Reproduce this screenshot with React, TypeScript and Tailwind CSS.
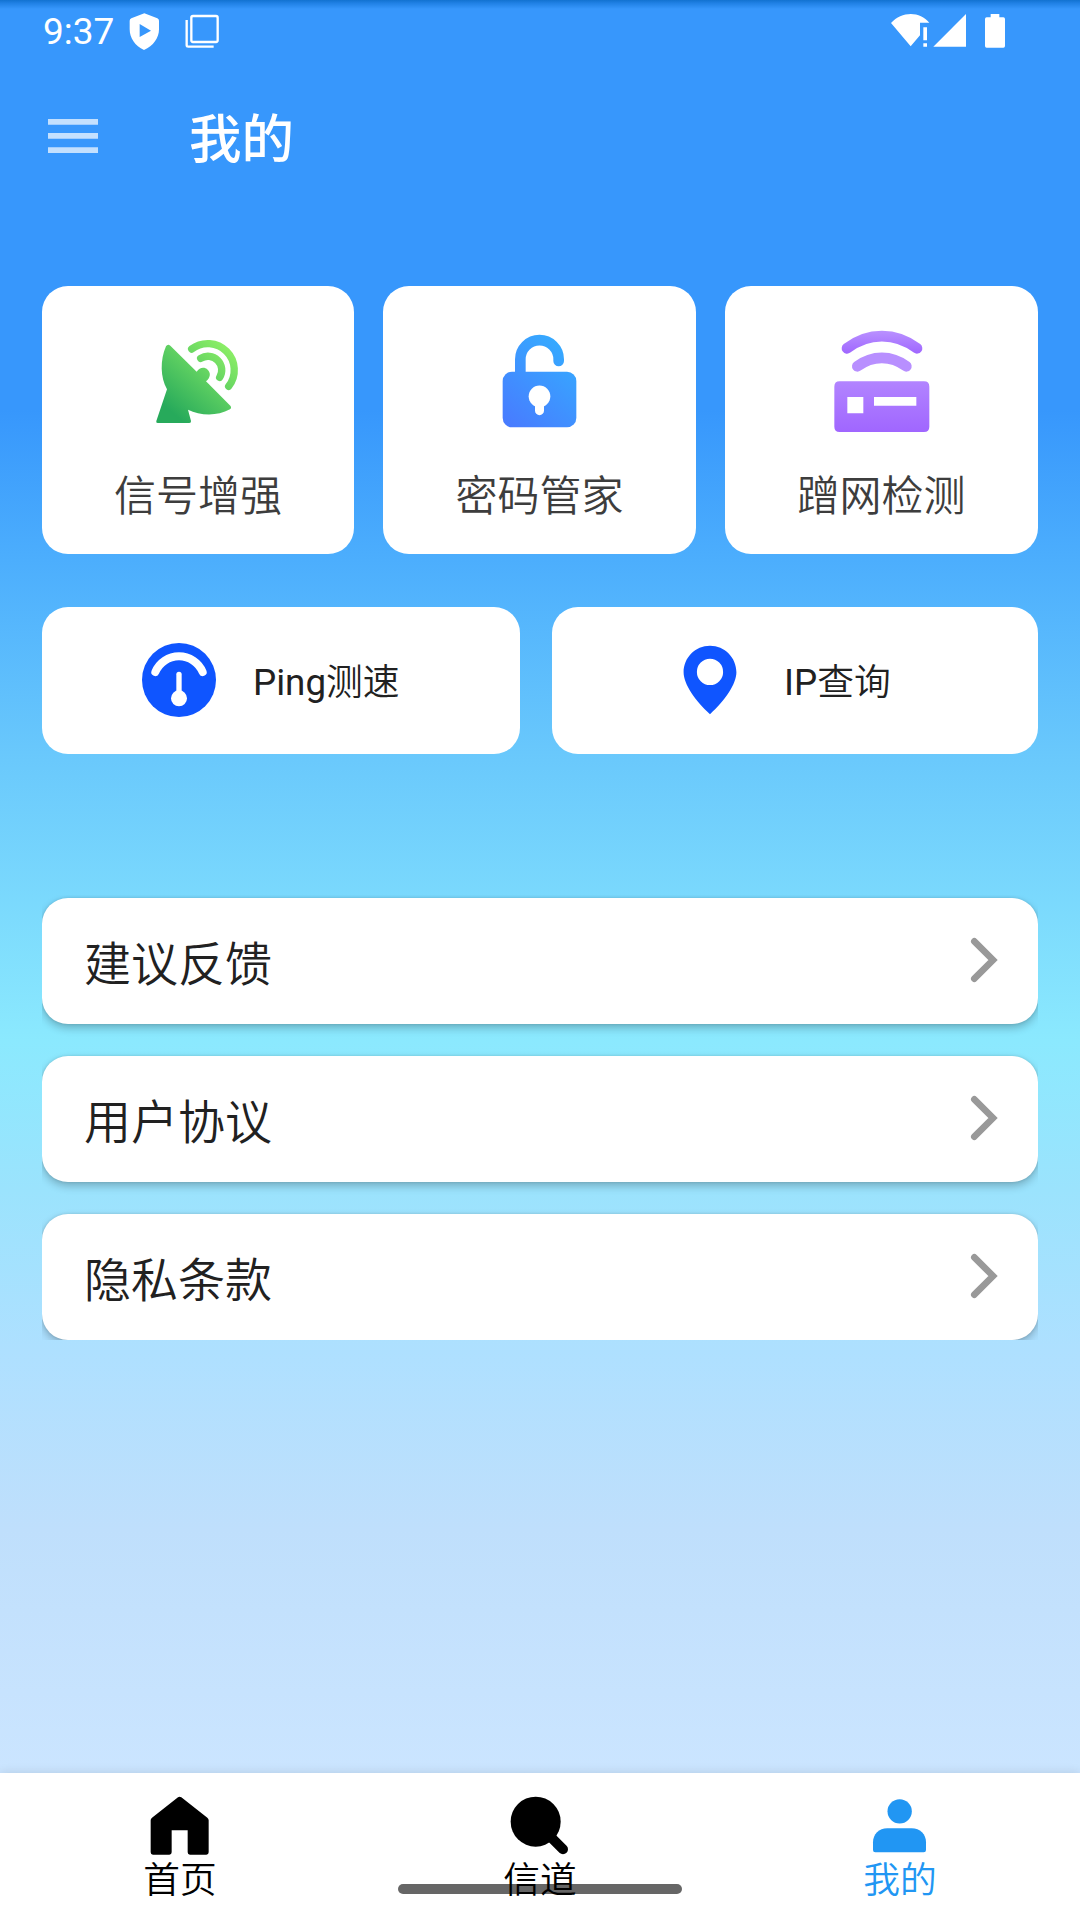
import React from "react";
import clsx from "clsx";

const StatusBar = () => (
    <div className="flex h-[63px] shrink-0 items-start bg-[linear-gradient(to_bottom,#1272d0_0px,#1f80e4_3px,#3797fc00_9px)] text-white">
        <div className="ml-[43px] mt-[10px] w-[74px] whitespace-nowrap text-[37px] leading-[44px]">
            9:37
        </div>
        <svg className="ml-3 mt-[13px]" width="31" height="37" viewBox="387 39 93 111" fill="currentColor">
            <path
                fillRule="evenodd"
                d="M433 40L472 55Q477 57 477 62V88C477 114 460 138 432 150C405 138 389 114 389 88V62Q389 57 394 55ZM419 72V111L453 92Z"
            />
        </svg>
        <svg className="ml-[25px] mt-[14px]" width="34" height="35" viewBox="555 42 102 105" fill="none" stroke="currentColor" strokeWidth="7">
            <rect x="574" y="48" width="79" height="78" rx="5" />
            <path d="M560 60V136Q560 140 565 140H641" />
        </svg>
        <svg className="ml-[671px] mt-[13px]" width="116" height="36" viewBox="90 39 348 108" fill="currentColor">
            <path d="M152 139L93 69C125 33 180 33 208 68H180V106Z" />
            <path d="M190 82h11v39h-11zM190 130h11v10h-11z" />
            <path d="M220 140L318 42V140Z" />
            <path d="M392 42h26v10h12q5 0 5 5v81q0 5-5 5h-50q-5 0-5-5v-81q0-5 5-5h12z" />
        </svg>
    </div>
);

const AppBar = () => (
    <div className="flex h-[147px] shrink-0 items-center pl-12">
        <svg className="mb-px opacity-70" width="50" height="36" viewBox="144 354 150 108" fill="#fff">
            <path d="M144 357h150v17H144zM144 399h150v17H144zM144 442h150v17H144z" />
        </svg>
        <h1 className="ml-[91px] mt-[6px] text-[52.5px] font-medium leading-[76px] text-white">我的</h1>
    </div>
);

const DishIcon = () => (
    <svg width="108" height="108" viewBox="342 171 324 324">
        <defs>
            <linearGradient id="dish" gradientUnits="userSpaceOnUse" x1="595" y1="235" x2="430" y2="430">
                <stop offset="0" stopColor="#8bee66" />
                <stop offset="1" stopColor="#27aa5b" />
            </linearGradient>
        </defs>
        <path
            fill="url(#dish)"
            d="M421 227L500 305C509 291 524 290 533 299C543 309 542 322 528 334L601 407Q606 413 600 418C560 440 510 437 474 419L483 453Q484 459 478 459H383Q377 459 379 453L411 358C391 322 390 270 408 229Q413 220 421 227Z"
        />
        <g fill="none" stroke="url(#dish)" strokeWidth="22" strokeLinecap="round">
            <path d="M485 237A79.500 79.500 0 0 1 596 349" />
            <path d="M512 265A41.400 41.400 0 0 1 569 322" />
        </g>
    </svg>
);

const LockIcon = () => (
    <svg width="108" height="108" viewBox="348 170 324 324">
        <defs>
            <linearGradient id="lock" gradientUnits="userSpaceOnUse" x1="590" y1="240" x2="405" y2="460">
                <stop offset="0" stopColor="#36a9ff" />
                <stop offset="1" stopColor="#487bff" />
            </linearGradient>
        </defs>
        <path d="M451 315V267A57.500 57.500 0 0 1 566 267V272" fill="none" stroke="url(#lock)" strokeWidth="32" strokeLinecap="round" />
        <rect x="398" y="304" width="221" height="167" rx="28" fill="url(#lock)" />
        <circle cx="508.500" cy="378" r="32.500" fill="#fff" />
        <path d="M508.500 385V421" stroke="#fff" strokeWidth="27" strokeLinecap="round" />
    </svg>
);

const RouterIcon = () => (
    <svg width="108" height="108" viewBox="353 171 324 324">
        <defs>
            <linearGradient id="wave" gradientUnits="userSpaceOnUse" x1="0" y1="182" x2="0" y2="250">
                <stop offset="0" stopColor="#b991ff" />
                <stop offset="1" stopColor="#a067ff" />
            </linearGradient>
            <linearGradient id="box" gradientUnits="userSpaceOnUse" x1="0" y1="334" x2="0" y2="486">
                <stop offset="0" stopColor="#b284ff" />
                <stop offset="1" stopColor="#a066ff" />
            </linearGradient>
        </defs>
        <g fill="none" strokeWidth="32" strokeLinecap="round">
            <path stroke="url(#wave)" d="M410 235C473 186 556 186 620 235" />
            <path stroke="#b88fff" d="M441 289C486 255 543 255 588 289" />
        </g>
        <path
            fill="url(#box)"
            fillRule="evenodd"
            d="M388 334H641Q657 334 657 350V470Q657 486 641 486H388Q372 486 372 470V350Q372 334 388 334ZM411 381V430H459V381ZM491 381V407H618V381Z"
        />
    </svg>
);

const GaugeIcon = () => (
    <svg className="mb-px" width="74" height="74" viewBox="336 159 222 222">
        <circle cx="447" cy="270" r="111" fill="#0f55ff" />
        <g fill="none" stroke="#fff" strokeLinecap="round">
            <path d="M376 246A77 77 0 0 1 518 246" strokeWidth="24" />
            <path d="M447 253V315" strokeWidth="16" />
        </g>
        <circle cx="447" cy="325" r="24" fill="#fff" />
    </svg>
);

const PinIcon = () => (
    <svg className="mb-px" width="54" height="70" viewBox="683 645 54 70">
        <path
            fill="#0f55ff"
            fillRule="evenodd"
            d="M710 645.700C695.300 645.700 683.600 657.500 683.600 672.300C683.600 684 695 700.500 710 714.200C725 700.500 736.400 684 736.400 672.300C736.400 657.500 724.700 645.700 710 645.700ZM710 658.700A13.100 13.200 0 0 1 710 685.100A13.100 13.200 0 0 1 710 658.700Z"
        />
    </svg>
);

const Chevron = () => (
    <svg className="mb-[2px]" width="28" height="46" viewBox="210 172 84 138" fill="none" stroke="#999" strokeWidth="20" strokeLinecap="round">
        <path d="M223 185L279 241L223 297" />
    </svg>
);

const HomeIcon = () => (
    <svg width="60" height="60" viewBox="60 95 180 180" fill="currentColor">
        <path d="M144 99Q149 95 154 99L232 160Q236 163 236 168V264Q236 271 229 271H180Q173 271 173 264V198H125V264Q125 271 118 271H69Q62 271 62 264V168Q62 163 66 160Z" />
    </svg>
);

const SearchIcon = () => (
    <svg width="60" height="60" viewBox="1140 95 180 180" fill="currentColor">
        <circle cx="1217" cy="172" r="75" />
        <path d="M1260 216L1299 255" stroke="currentColor" strokeWidth="30" strokeLinecap="round" />
    </svg>
);

const PersonIcon = () => (
    <svg width="60" height="60" viewBox="810 95 180 180" fill="currentColor">
        <circle cx="899" cy="141" r="36.500" />
        <path d="M862 192H935C960 192 978 210 978 234V257Q978 264 971 264H826Q819 264 819 257V234C819 210 837 192 862 192Z" />
    </svg>
);

const tools = [
    { label: "信号增强", icon: <DishIcon /> },
    { label: "密码管家", icon: <LockIcon /> },
    { label: "蹭网检测", icon: <RouterIcon /> },
];

const links = ["建议反馈", "用户协议", "隐私条款"];

const tabs = [
    { label: "首页", icon: <HomeIcon />, active: false },
    { label: "信道", icon: <SearchIcon />, active: false },
    { label: "我的", icon: <PersonIcon />, active: true },
];

const App = () => {
    return (
        <div className="relative flex h-[1920px] w-[1080px] flex-col overflow-hidden bg-[linear-gradient(to_bottom,#3797fc_0px,#3797fc_410px,#4caefd_560px,#6ac9fc_760px,#8be9fe_1040px,#9be3fd_1190px,#aee0ff_1350px,#bfdffc_1530px,#cbe5ff_1773px)] font-[Roboto,'Noto_Sans_CJK_SC',sans-serif]">
            <StatusBar />
            <AppBar />
            <div className="flex grow flex-col px-[42px] pt-[76px]">
                <div className="grid h-[268px] grid-cols-[312px_313px_313px] gap-[29px]">
                    {tools.map((tool) => (
                        <div key={tool.label} className="flex flex-col items-center rounded-[26px] bg-white pt-[41px]">
                            {tool.icon}
                            <div className="mt-[34px] text-[42px] font-[350] leading-[56px] text-[#3d3d3d]">{tool.label}</div>
                        </div>
                    ))}
                </div>
                <div className="mt-[53px] flex h-[147px] justify-between text-[36.75px] font-[350] text-[#212121]">
                    <div className="flex w-[478px] items-center rounded-[26px] bg-white pl-[100px]">
                        <GaugeIcon />
                        <div className="ml-[37px] mt-[5px]">
                            <span className="font-normal">Ping</span>测速
                        </div>
                    </div>
                    <div className="flex w-[486px] items-center rounded-[26px] bg-white pl-[131px]">
                        <PinIcon />
                        <div className="ml-[47px] mt-[5px]">
                            <span className="font-normal">IP</span>查询
                        </div>
                    </div>
                </div>
                {/* overflow cuts the card shadows at the list edges */}
                <div className="mt-[141px] flex h-[445px] flex-col gap-8 overflow-hidden pt-[3px]">
                    {links.map((link) => (
                        <div
                            key={link}
                            className="flex h-[126px] shrink-0 items-center justify-between rounded-[26px] bg-white pl-[42px] pr-10 shadow-[0_4px_8px_rgba(0,0,0,0.24),0_0_3px_rgba(0,0,0,0.12)]"
                        >
                            <span className="mt-2 text-[47px] font-[350] leading-[68px] text-[#212121]">{link}</span>
                            <Chevron />
                        </div>
                    ))}
                </div>
            </div>
            <div className="grid h-[147px] shrink-0 grid-cols-3 bg-white shadow-[0_0_10px_rgba(0,0,0,0.12)]">
                {tabs.map((tab) => (
                    <div
                        key={tab.label}
                        className={clsx("flex flex-col items-center pt-[23px]", tab.active ? "text-[#2196f3]" : "text-black")}
                    >
                        {tab.icon}
                        <div className="mt-px text-[36.75px] font-[350] leading-[48px]">{tab.label}</div>
                    </div>
                ))}
            </div>
            <div className="absolute bottom-[26px] left-[398px] h-[10px] w-[284px] rounded-full bg-black/60" />
        </div>
    );
};

export default App;
